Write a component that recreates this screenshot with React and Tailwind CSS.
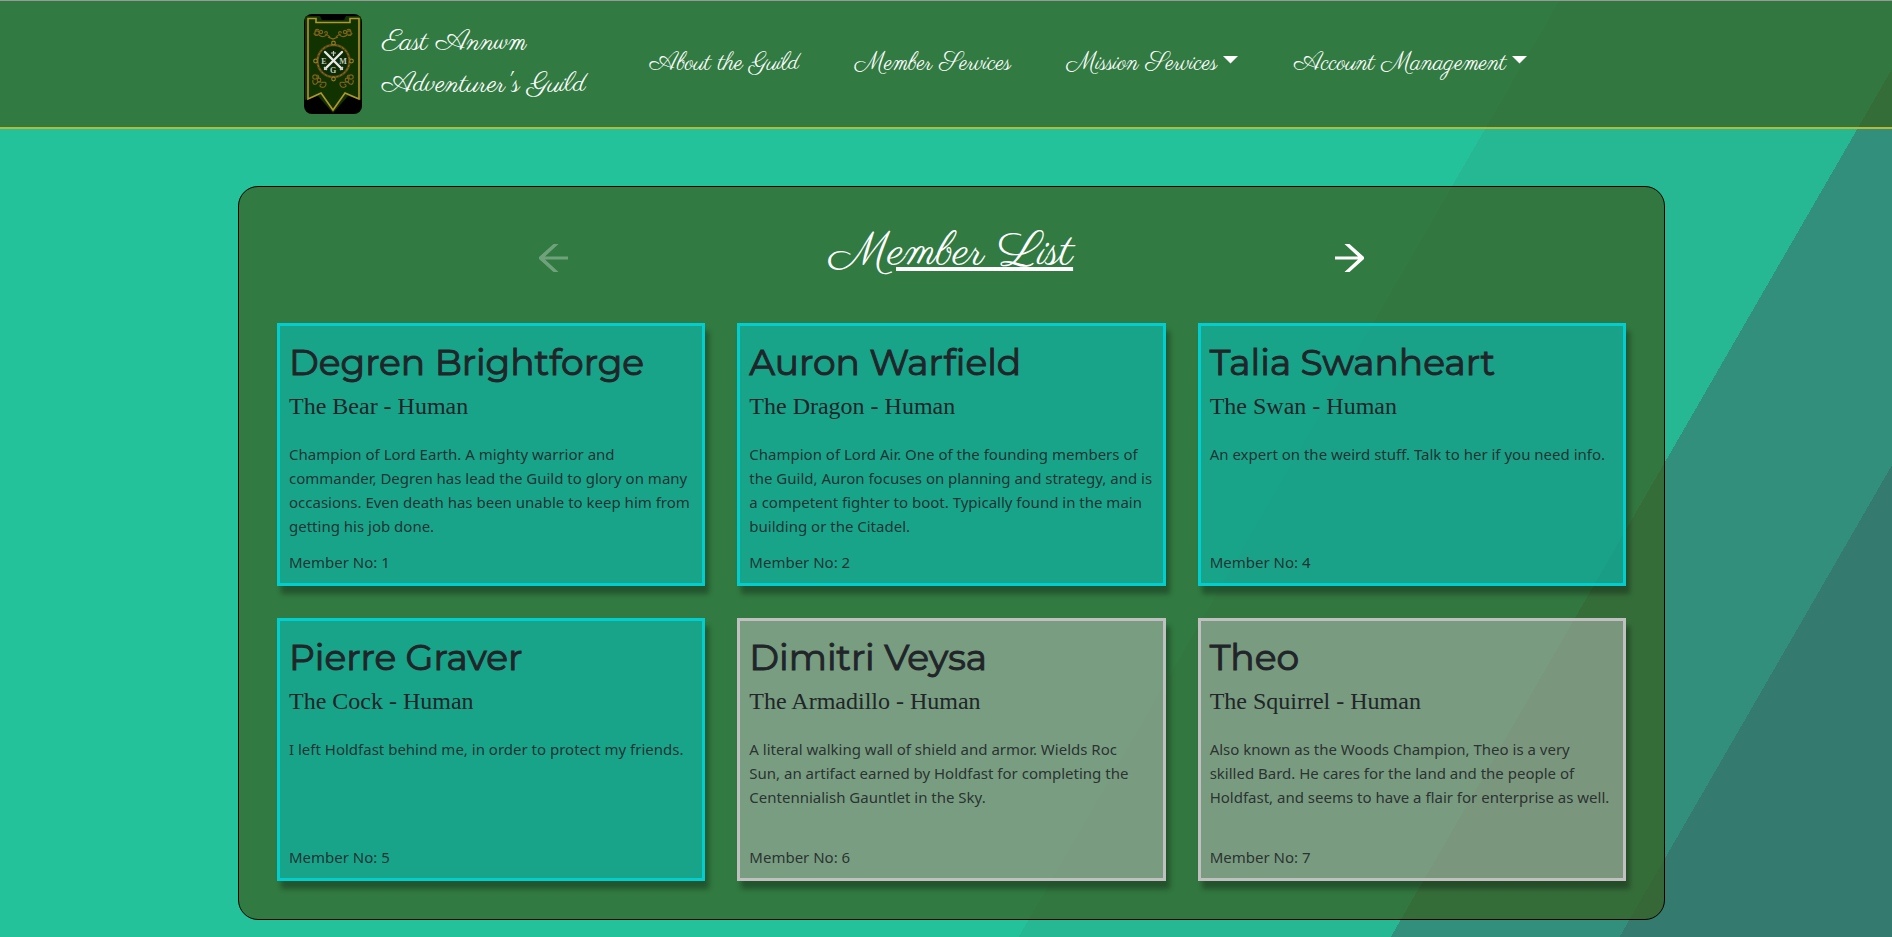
const members = [
  { no: 1, name: 'Degren Brightforge', title: 'The Bear - Human', active: true, bio: 'Champion of Lord Earth. A mighty warrior and commander, Degren has lead the Guild to glory on many occasions. Even death has been unable to keep him from getting his job done.' },
  { no: 2, name: 'Auron Warfield', title: 'The Dragon - Human', active: true, bio: 'Champion of Lord Air. One of the founding members of the Guild, Auron focuses on planning and strategy, and is a competent fighter to boot. Typically found in the main building or the Citadel.' },
  { no: 4, name: 'Talia Swanheart', title: 'The Swan - Human', active: true, bio: 'An expert on the weird stuff. Talk to her if you need info.' },
  { no: 5, name: 'Pierre Graver', title: 'The Cock - Human', active: true, bio: 'I left Holdfast behind me, in order to protect my friends.' },
  { no: 6, name: 'Dimitri Veysa', title: 'The Armadillo - Human', active: false, bio: 'A literal walking wall of shield and armor. Wields Roc Sun,\u00a0an artifact earned by Holdfast for completing the Centennialish Gauntlet in the Sky.' },
  { no: 7, name: 'Theo', title: 'The Squirrel - Human', active: false, bio: 'Also known as the Woods Champion, Theo is a very skilled Bard. He cares for the land and the people of Holdfast, and seems to have a flair for enterprise as well.' },
];

function Scrolls({ transform }) {
  return (
    <g transform={transform} fill="none" stroke="#7d601a" strokeWidth="1.2">
      <circle cx="13" cy="19" r="2.2" />
      <circle cx="17" cy="18" r="1.6" />
      <path d="M11 17c1-2 3-2 4-1M15 21c2 2 4 2 6 1s3-3 2-4-3 0-2 1M21 20c2 1 4 1 5 3M10 19c0 2 2 3 4 2" />
      <circle cx="11" cy="63" r="2.2" />
      <circle cx="15" cy="66" r="1.8" />
      <path d="M9 66c-1 3 1 5 3 4s1-3 4-2 6-1 6 2-3 4-5 3-1-3 1-3M13 61c2 0 2 2 1 4" />
    </g>
  );
}

function Banner() {
  return (
    <svg viewBox="0 0 58 100" className="h-[100px] w-[58px] shrink-0 rounded-lg bg-black" role="img" aria-label="Guild banner">
      <path d="M1 2h15l2 4h22l2-4h15v84l-13-4-15 17-15-17-13 4z" fill="#103300" />
      <path d="M4 4.5h8v4h34v-4h9v80.5l-14-6-12 17-12-17-13 6z" fill="#103300" stroke="#b5962a" strokeWidth="1.6" />
      <Scrolls />
      <Scrolls transform="translate(58 0) scale(-1 1)" />
      <path d="M24 23l5 2 5-2" fill="none" stroke="#8a6a1c" strokeWidth="1.3" />
      <circle cx="29.5" cy="47" r="16" fill="#0c2b04" stroke="#5f4b14" strokeWidth="2.6" />
      <circle cx="29.5" cy="47" r="16" fill="none" stroke="#96772a" strokeWidth="1" strokeDasharray="2 2" />
      <g fill="#103300" stroke="#9a7a22" strokeWidth="1.2">
        <circle cx="29.5" cy="29" r="1.8" />
        <circle cx="29.5" cy="65" r="1.8" />
        <circle cx="11.5" cy="47" r="1.8" />
        <circle cx="47.5" cy="47" r="1.8" />
      </g>
      <path d="M21 38l17 17M38 38L21 55" stroke="#e8e8e8" strokeWidth="2.4" strokeLinecap="round" />
      <path d="M20 53l3 3M36 56l3-3M27 39h5M29.5 37v5" stroke="#c8c8c8" strokeWidth="1.2" />
      <g fill="#c4cbc0" fontFamily="Liberation Serif, serif" fontSize="8" fontWeight="bold" textAnchor="middle">
        <text x="20" y="50">E</text>
        <text x="39" y="50">M</text>
        <text x="29" y="59">G</text>
      </g>
    </svg>
  );
}

function Arrow({ flip }) {
  return (
    <svg viewBox="0 0 29 28" className={flip ? 'h-7 w-[29px] -scale-x-100' : 'h-7 w-[29px]'} aria-hidden="true">
      <path d="M0 12.500h23L9.500 0h5L29 13v2L14.500 28h-5L23 15.500H0z" fill="currentColor" />
    </svg>
  );
}

function Caret() {
  return (
    <svg viewBox="0 0 15 8" className="mb-2 h-2 w-[15px]" aria-hidden="true">
      <path d="M0 0h15L7.500 7.500z" fill="currentColor" />
    </svg>
  );
}

function MemberCard({ member }) {
  const tone = member.active
    ? 'border-[#00ced1] bg-[#00ced1]/50'
    : 'border-[#c0c0c0] bg-[#c0c0c0]/50';
  return (
    <article className={`flex flex-col border-[3px] px-[9px] pt-3 pb-[9px] text-[#212529] shadow-[4px_8px_5px_rgba(0,0,0,0.3)] bg-clip-padding ${tone}`}>
      <h2 className="font-[Montserrat,Inter,sans-serif] text-4xl leading-12 font-normal [-webkit-text-stroke:1px_#212529]">{member.name}</h2>
      <h3 className="mt-1 font-['Liberation_Serif',serif] text-2xl leading-8">{member.title}</h3>
      <p className="mt-5 min-h-24 grow text-[15px] leading-6 text-[#212529]/90">{member.bio}</p>
      <p className="mt-3 text-[15px] leading-6 text-[#212529]/90">Member No: {member.no}</p>
    </article>
  );
}

export default function App() {
  return (
    <div className="min-h-screen bg-[linear-gradient(120deg,#23c29a_64.1%,#26b793_64.1%,#26b793_79.4%,#318f7b_79.4%,#318f7b_88.8%,#357a6f_88.8%)] pb-4 font-['Noto_Sans',sans-serif]">
      <header className="border-t border-b-2 border-t-[#999999] border-b-[#b8ba32] bg-[#376223]/75 bg-clip-padding py-[13px]">
        <div className="mx-auto flex w-full max-w-[1284px] items-center font-[Parisienne,'Liberation_Serif',serif] text-white">
          <a href="#home" className="flex items-center gap-5 text-[28px] leading-[42px]">
            <Banner />
            <span>East Annwm<br />Adventurer's Guild</span>
          </a>
          <nav className="ml-16 flex items-center gap-14 text-2xl leading-8">
            <a href="#about">About the Guild</a>
            <a href="#members">Member Services</a>
            <button type="button" className="flex items-center gap-[6px]">Mission Services <Caret /></button>
            <button type="button" className="flex items-center gap-[6px]">Account Management <Caret /></button>
          </nav>
        </div>
      </header>
      <main className="mt-[57px] mr-[227px] ml-[238px] rounded-[20px] border border-black bg-[#376223]/75 p-[38px]">
        <div className="grid grid-cols-[1fr_auto_1fr] items-end pb-[38px] text-white">
          <button type="button" disabled aria-label="Previous page" className="mr-[262px] mb-[13px] justify-self-end opacity-30"><Arrow flip /></button>
          <h1 className="pb-1 font-[Parisienne,'Liberation_Serif',serif] text-5xl leading-14 underline">Member List</h1>
          <button type="button" aria-label="Next page" className="mb-[13px] ml-[262px] justify-self-start"><Arrow /></button>
        </div>
        <div className="grid grid-cols-3 gap-8">
          {members.map((member) => <MemberCard key={member.no} member={member} />)}
        </div>
      </main>
    </div>
  );
}
